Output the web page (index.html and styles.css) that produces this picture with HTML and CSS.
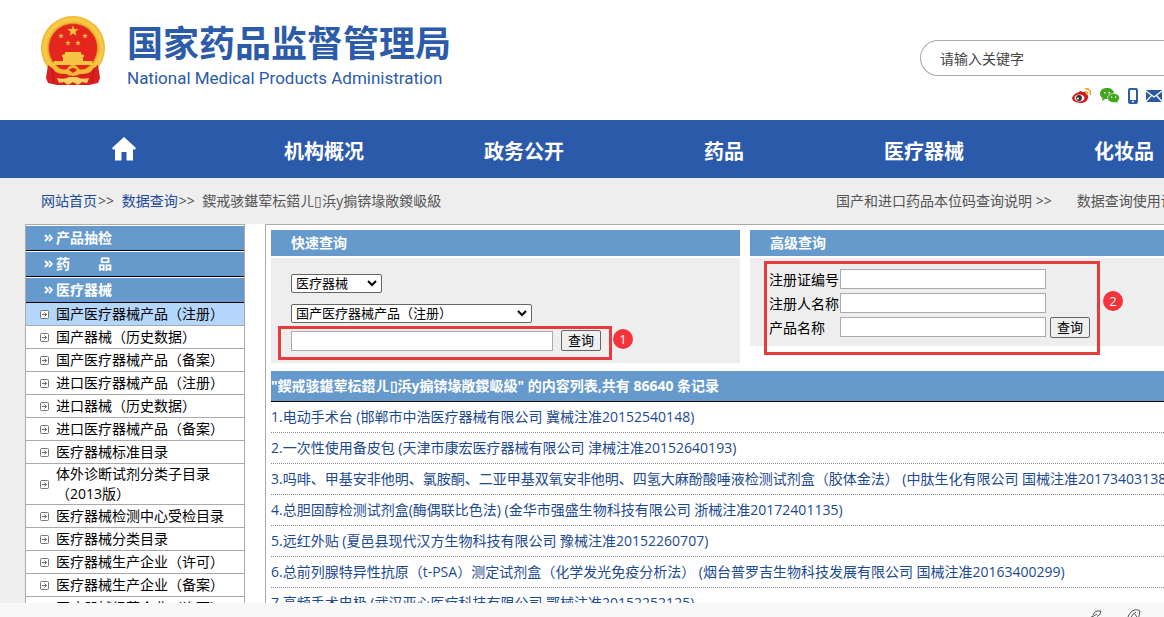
FILE: index.html
```html
<!DOCTYPE html>
<html lang="zh-CN">
<head>
    <meta charset="UTF-8">
    <meta name="viewport" content="width=device-width, initial-scale=1.0">
    <title>国家药品监督管理局 - 数据查询</title>
    <link rel="stylesheet" href="styles.css">
</head>
<body>
    <!-- shared icons -->
    <svg class="sprite" aria-hidden="true">
        <symbol id="arrow-box" viewBox="0 0 9 9">
            <rect x="0.5" y="0.5" width="8" height="8" rx="1" fill="#fff" stroke="#777"/>
            <path d="M2 4.500h4.500M4.500 2.500l2 2-2 2" fill="none" stroke="#444" stroke-width=".8"/>
        </symbol>
        <symbol id="chevrons" viewBox="0 0 9 8">
            <path d="M1 1l3 3-3 3M5 1l3 3-3 3" fill="none" stroke="#fff" stroke-width="1.800"/>
        </symbol>
        <symbol id="star" viewBox="-10 -10 20 20">
            <path d="M0-10L2.300-3.200 9.500-3.100 3.800 1.200 5.900 8.100 0 4-5.900 8.100-3.800 1.200-9.500-3.100-2.300-3.200z" fill="#f3c03c"/>
        </symbol>
    </svg>

    <header class="header">
        <a class="logo" href="#">
            <svg class="emblem" viewBox="0 0 66 70" aria-hidden="true">
                <circle cx="33" cy="32" r="32" fill="#f2b632"/>
                <circle cx="33" cy="32" r="28.500" fill="none" stroke="#f7c948" stroke-width="4"/>
                <circle cx="33" cy="32" r="24.500" fill="#e5261f" stroke="#d99a1e" stroke-width=".8"/>
                <path d="M8 49q8 7 17 5l8 3 8-3q9 2 17-5l2 13-2 5-9 2H17l-9-2-2-5z" fill="#dc2020"/>
                <path d="M12 53l2 14M54 53l-2 14" fill="none" stroke="#b01616"/>
                <use href="#star" x="27" y="9" width="12" height="12"/>
                <use href="#star" x="18" y="17" width="6" height="6"/>
                <use href="#star" x="42" y="17" width="6" height="6"/>
                <use href="#star" x="25" y="24" width="6" height="6"/>
                <use href="#star" x="35" y="24" width="6" height="6"/>
                <path d="M25 36h16v2l3 1v2H22v-2l3-1zM23 41h20v4H23zM14 45h38l1 4H13z" fill="#f6c545"/>
                <path d="M11 49q8 6 16 4 2-4 6-4t6 4q8 2 16-4-3 10-15 9-7 4-14 0-12 1-15-9z" fill="#f3b834"/>
                <path d="M29 54q4-4 8 0l-4 3z" fill="#dc2020"/>
                <path d="M17 62q8 2 12-1h8q4 3 12 1l-2 5-5-1-4 3-5-3-5 3-4-3-5 1z" fill="#f7d063"/>
            </svg>
            <span class="logo-text">
                <span class="logo-cn">国家药品监督管理局</span>
                <span class="logo-en">National Medical Products Administration</span>
            </span>
        </a>
        <div class="tools">
            <input class="search" type="text" placeholder="请输入关键字" aria-label="请输入关键字">
            <div class="social">
                <a href="#" aria-label="微博">
                    <svg width="20" height="16" viewBox="0 0 20 16">
                        <path d="M7 4q2-2 3 0 4-1 4 2 3 1 2 4-1 5-8 5-8-1-8-5 1-4 7-6z" fill="#d4151c"/>
                        <ellipse cx="7.500" cy="10" rx="5" ry="3.500" fill="#fff"/>
                        <circle cx="7" cy="10" r="2.900" fill="#333"/>
                        <circle cx="6" cy="10.500" r="1" fill="#fff"/>
                        <path d="M13 1q6-1 5.500 6M13 4q3-.5 2.500 2.500" fill="none" stroke="#eaa41c" stroke-width="1.500"/>
                    </svg>
                </a>
                <a href="#" aria-label="微信">
                    <svg width="20" height="16" viewBox="0 0 20 16">
                        <path d="M7 0c4 0 7 2 7 5.500s-3 5.500-7 5.500l-2 0-3 2 .6-3C1 9 0 8 0 5.500 0 2 3 0 7 0z" fill="#43a51f"/>
                        <path d="M13.500 5.500c3.500 0 6 2 6 4.500 0 1.500-.8 2.700-2 3.500l.4 2-2.300-1.100c-4.500.8-8-1.400-8-4.400 0-2.500 2.500-4.500 5.900-4.500z" fill="#43a51f" stroke="#fff" stroke-width=".6"/>
                        <path d="M4 4h1.500v1.500H4zM8.500 4H10v1.500H8.500zM11 8.500h1.300v1.300H11zM15 8.500h1.300v1.300H15z" fill="#fff"/>
                    </svg>
                </a>
                <a href="#" aria-label="手机版">
                    <svg width="10" height="16" viewBox="0 0 10 16">
                        <rect x="1" y="1" width="8" height="14" rx="1" fill="#fff" stroke="#2e5f9e" stroke-width="2"/>
                        <path d="M1 12h8v3H1z" fill="#2e5f9e"/>
                        <circle cx="5" cy="13.500" r="1" fill="#fff"/>
                    </svg>
                </a>
                <a href="#" aria-label="邮箱">
                    <svg width="16" height="12" viewBox="0 0 16 12">
                        <path d="M0 0h16v12H0z" fill="#2c5aa0"/>
                        <path d="M0 1l8 6 8-6M0 11.500l5.500-6M16 11.500l-5.500-6" fill="none" stroke="#fff" stroke-width="1.300"/>
                    </svg>
                </a>
            </div>
        </div>
    </header>

    <nav class="nav">
        <a href="#" aria-label="首页">
            <svg width="24" height="24" viewBox="0 0 24 24">
                <path d="M12 0L0 11l1.500 2L3 12v11.500h6.500V15h5v8.500H21V12l1.500 1L24 11z" fill="#fff"/>
            </svg>
        </a>
        <a href="#">机构概况</a>
        <a href="#">政务公开</a>
        <a href="#">药品</a>
        <a href="#">医疗器械</a>
        <a href="#">化妆品</a>
    </nav>

    <main class="main">
        <div class="crumbs">
            <div class="path"><a href="#">网站首页</a>&gt;&gt; <a href="#">数据查询</a>&gt;&gt; <span>鍥戒骇鍖荤枟鍣ㄦ▯浜у搧锛堟敞鍐岋級</span></div>
            <div class="guides">
                <a href="#">国产和进口药品本位码查询说明 &gt;&gt;</a>
                <a href="#">数据查询使用说明 &gt;&gt;</a>
            </div>
        </div>

        <div class="content">
            <aside class="sidebar">
                <h2><svg><use href="#chevrons"/></svg>产品抽检</h2>
                <h2><svg><use href="#chevrons"/></svg>药　　品</h2>
                <h2><svg><use href="#chevrons"/></svg>医疗器械</h2>
                <ul>
                    <li class="current"><svg><use href="#arrow-box"/></svg><a href="#">国产医疗器械产品（注册）</a></li>
                    <li><svg><use href="#arrow-box"/></svg><a href="#">国产器械（历史数据）</a></li>
                    <li><svg><use href="#arrow-box"/></svg><a href="#">国产医疗器械产品（备案）</a></li>
                    <li><svg><use href="#arrow-box"/></svg><a href="#">进口医疗器械产品（注册）</a></li>
                    <li><svg><use href="#arrow-box"/></svg><a href="#">进口器械（历史数据）</a></li>
                    <li><svg><use href="#arrow-box"/></svg><a href="#">进口医疗器械产品（备案）</a></li>
                    <li><svg><use href="#arrow-box"/></svg><a href="#">医疗器械标准目录</a></li>
                    <li><svg><use href="#arrow-box"/></svg><a href="#">体外诊断试剂分类子目录（2013版）</a></li>
                    <li><svg><use href="#arrow-box"/></svg><a href="#">医疗器械检测中心受检目录</a></li>
                    <li><svg><use href="#arrow-box"/></svg><a href="#">医疗器械分类目录</a></li>
                    <li><svg><use href="#arrow-box"/></svg><a href="#">医疗器械生产企业（许可）</a></li>
                    <li><svg><use href="#arrow-box"/></svg><a href="#">医疗器械生产企业（备案）</a></li>
                    <li><svg><use href="#arrow-box"/></svg><a href="#">医疗器械经营企业（许可）</a></li>
                </ul>
            </aside>

            <section class="results">
                <div class="panels">
                    <form class="panel quick">
                        <h3>快速查询</h3>
                        <div class="panel-body">
                            <select class="kind" aria-label="类别"><option>医疗器械</option></select>
                            <select class="database" aria-label="数据库"><option>国产医疗器械产品（注册）</option></select>
                            <div class="row">
                                <input type="text" aria-label="关键字">
                                <button type="button">查询</button>
                                <div class="mark"><span class="badge">1</span></div>
                            </div>
                        </div>
                    </form>
                    <form class="panel advanced">
                        <h3>高级查询</h3>
                        <div class="panel-body">
                            <div class="fields">
                                <label for="cert">注册证编号</label><input type="text" id="cert">
                                <label for="holder">注册人名称</label><input type="text" id="holder">
                                <label for="product">产品名称</label><input type="text" id="product">
                                <button type="button">查询</button>
                                <div class="mark"><span class="badge">2</span></div>
                            </div>
                        </div>
                    </form>
                </div>

                <h3 class="list-title">"鍥戒骇鍖荤枟鍣ㄦ▯浜у搧锛堟敞鍐岋級" 的内容列表,共有 86640 条记录</h3>
                <ul class="list">
                    <li><a href="#">1.电动手术台 (邯郸市中浩医疗器械有限公司 冀械注准20152540148)</a></li>
                    <li><a href="#">2.一次性使用备皮包 (天津市康宏医疗器械有限公司 津械注准20152640193)</a></li>
                    <li><a href="#">3.吗啡、甲基安非他明、氯胺酮、二亚甲基双氧安非他明、四氢大麻酚酸唾液检测试剂盒（胶体金法） (中肽生化有限公司 国械注准20173403138)</a></li>
                    <li><a href="#">4.总胆固醇检测试剂盒(酶偶联比色法) (金华市强盛生物科技有限公司 浙械注准20172401135)</a></li>
                    <li><a href="#">5.远红外贴 (夏邑县现代汉方生物科技有限公司 豫械注准20152260707)</a></li>
                    <li><a href="#">6.总前列腺特异性抗原（t-PSA）测定试剂盒（化学发光免疫分析法） (烟台普罗吉生物科技发展有限公司 国械注准20163400299)</a></li>
                    <li><a href="#">7.高频手术电极 (武汉亚心医疗科技有限公司 鄂械注准20152252125)</a></li>
                </ul>
            </section>
        </div>
    </main>

    <footer class="statusbar">
        <svg width="14" height="14" viewBox="0 0 14 14" fill="none" stroke="#555">
            <path d="M4 8l5-3M5 6q1-3 4-4h4q0 4-4 5.500M6 8q-1 3-5 4 0-4 4-5"/>
        </svg>
        <svg width="14" height="14" viewBox="0 0 14 14" fill="none" stroke="#555">
            <path d="M1 11q-1-4 3-8t9-1q0 6-4 9M4 11q-1-4 5-8M7 4l3 4"/>
        </svg>
    </footer>
</body>
</html>
```
FILE: styles.css
```css
* {
    box-sizing: border-box;
}
body {
    display: flex;
    flex-direction: column;
    height: 100vh;
    margin: 0;
    overflow: hidden;
    font: 14px/20px "Open Sans", "Noto Sans CJK SC", sans-serif;
    text-spacing-trim: space-all;
    color: #000;
    background: #fff;
}
a {
    color: inherit;
    text-decoration: none;
}
ul {
    margin: 0;
    padding: 0;
    list-style: none;
}
h2, h3 {
    margin: 0;
    font-size: 14px;
}
input, select, button {
    font: inherit;
    margin: 0;
}
svg {
    flex: none;
}
.sprite {
    display: none;
}

/* header */
.header {
    display: flex;
    flex: none;
    justify-content: space-between;
    height: 120px;
    padding-left: 40px;
}
.logo {
    display: flex;
    gap: 21px;
    padding-top: 16px;
    color: #2b5ba9;
}
.emblem {
    width: 66px;
    height: 70px;
}
.logo-text {
    display: flex;
    flex-direction: column;
    gap: 2px;
    padding-top: 6px;
}
.logo-cn {
    font-size: 36px;
    font-weight: bold;
    line-height: 44px;
}
.logo-en {
    font: 17px/20px Roboto, sans-serif;
}
.tools {
    width: 244px;
    padding-top: 40px;
}
.search {
    width: 100%;
    height: 36px;
    padding: 0 19px;
    border: 1px solid #aaa;
    border-right: 0;
    border-radius: 18px 0 0 18px;
    outline: 0;
}
.search::placeholder {
    color: #444;
}
.social {
    display: flex;
    align-items: center;
    justify-content: flex-end;
    gap: 8px;
    padding: 12px 2px 0 0;
}
.social a {
    display: flex;
}

/* navigation */
.nav {
    display: flex;
    flex: none;
    height: 58px;
    padding-left: 24px;
    overflow: hidden;
    background: #2b5aaa;
}
.nav a {
    display: flex;
    flex: 0 0 200px;
    align-items: center;
    justify-content: center;
    color: #fff;
    font-size: 20px;
    font-weight: bold;
    line-height: 52px;
    padding-top: 6px;
}
.nav a:first-child {
    padding-top: 0;
}

/* breadcrumbs */
.main {
    flex: 1;
    min-height: 0;
    overflow: hidden;
    background: #eee;
}
.crumbs {
    display: flex;
    justify-content: space-between;
    height: 46px;
    padding: 13px 0 0 41px;
    color: #555;
    white-space: nowrap;
}
.path a {
    margin-right: 1px;
    color: #1c4a9c;
}
.path a + a, .path span {
    margin-left: 4px;
}
.guides {
    display: flex;
    gap: 25px;
    width: 328px;
}

/* content */
.content {
    display: flex;
    gap: 20px;
    margin-left: 25px;
    background: #fff;
}
.sidebar {
    flex: 0 0 220px;
    border: 1px solid #aaa;
    border-bottom: 0;
}
.sidebar h2 {
    display: flex;
    align-items: center;
    gap: 3px;
    height: 26px;
    padding-left: 18px;
    border-top: 1px solid #fff;
    border-bottom: 1px solid #000;
    color: #fff;
    background: #69c;
}
.sidebar h2 svg {
    width: 9px;
    height: 8px;
}
.sidebar li {
    display: flex;
    align-items: center;
    gap: 7px;
    min-height: 23px;
    padding: 0 14px;
    border-bottom: 1px solid #aaa;
}
.sidebar li svg {
    width: 9px;
    height: 9px;
}
.sidebar .current {
    background: #b5d6fb;
}
.results {
    flex: 1;
    min-width: 0;
    padding: 5px 0 0 5px;
    border-top: 1px solid #aaa;
    border-left: 1px solid #aaa;
}

/* search panels */
.panels {
    display: flex;
    align-items: flex-start;
    gap: 10px;
    margin-bottom: 8px;
}
.panel h3 {
    height: 26px;
    padding-left: 20px;
    line-height: 26px;
    color: #fff;
    background: #69c;
}
.panel-body {
    margin-top: 2px;
    background: #eee;
}
.panel input {
    height: 20px;
    padding: 0 4px;
    border: 1px solid #aaa;
    background: #fff;
}
.panel select {
    appearance: none;
    height: 19px;
    padding: 0 4px;
    border: 1px solid #666;
    border-radius: 2px;
    background: #fff url("data:image/svg+xml,%3Csvg xmlns='http://www.w3.org/2000/svg' width='10' height='7'%3E%3Cpath d='M1 1l4 4 4-4' fill='none' stroke='%23000' stroke-width='2'/%3E%3C/svg%3E") no-repeat right 4px center;
    font-size: 13px;
    line-height: 17px;
}
.panel button {
    width: 40px;
    height: 21px;
    padding: 0;
    border: 1px solid #666;
    border-radius: 2px;
    background: #efefef;
    font-size: 13px;
    line-height: 19px;
}
.quick {
    flex: 0 0 469px;
}
.quick .panel-body {
    display: flex;
    flex-direction: column;
    align-items: flex-start;
    gap: 11px;
    padding: 16px 20px 12px;
}
.panel .kind {
    width: 91px;
}
.panel .database {
    width: 241px;
}
.row {
    display: flex;
    align-items: flex-end;
    gap: 8px;
    position: relative;
    margin-top: -4px;
}
.row input {
    width: 262px;
}
.advanced {
    flex: 1;
}
.advanced .panel-body {
    padding: 11px 19px 9px;
}
.fields {
    display: grid;
    grid-template-columns: 71px 206px 40px;
    grid-auto-rows: 20px;
    row-gap: 4px;
    position: relative;
    width: max-content;
}
.fields label {
    grid-column: 1;
    line-height: 22px;
}
.fields button {
    margin-left: 4px;
}

/* red call-outs over the forms */
.mark {
    position: absolute;
    inset: -4px -11px -9px -13px;
    border: 3px solid #e43c3f;
    pointer-events: none;
}
.fields .mark {
    inset: -8px -14px -18px -5px;
}
.badge {
    position: absolute;
    top: 0;
    left: calc(100% + 4px);
    width: 20px;
    border-radius: 50%;
    color: #fff;
    background: #f5333a;
    font-size: 13px;
    text-align: center;
}
.fields .badge {
    top: 27px;
    left: calc(100% + 6px);
}

/* result list */
.list-title {
    height: 31px;
    border-bottom: 1px solid #000;
    line-height: 30px;
    color: #fff;
    background: #69c;
}
.list li {
    height: 31px;
    overflow: hidden;
    border-bottom: 1px dotted #888;
    line-height: 30px;
    color: #1c4a90;
    white-space: nowrap;
}

.statusbar {
    display: flex;
    flex: none;
    gap: 25px;
    justify-content: flex-end;
    height: 14px;
    padding: 6px 23px 0 0;
    overflow: hidden;
    background: #f8f8f8;
}
```
